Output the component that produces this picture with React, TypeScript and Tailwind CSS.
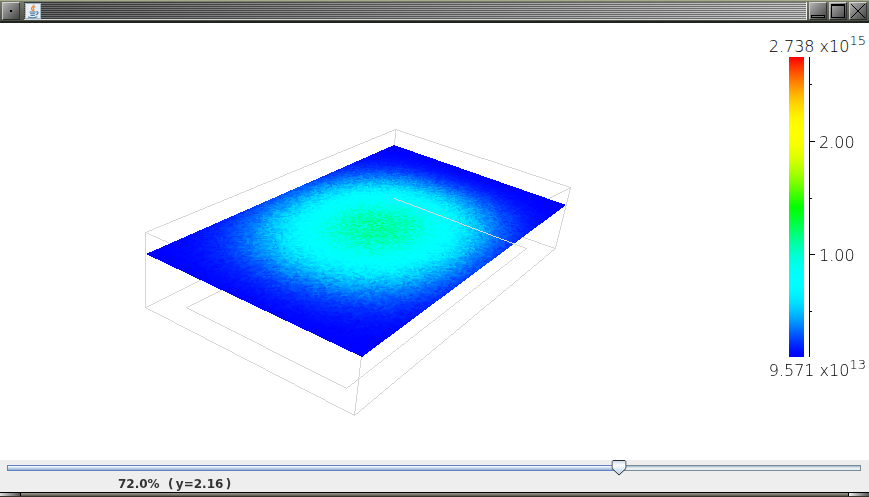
import { useEffect, useRef, useState } from "react";
import type { ReactNode } from "react";

type Point = [number, number];

const PLOT_W = 600;
const PLOT_H = 437;

// Corners of the slice plane: back, right, front, left.
const PLANE: Point[] = [
  [394, 122],
  [566, 182],
  [362, 334],
  [146, 231],
];

const OUTLINE: [Point, Point][] = [
  [[395, 106], [570, 164]],
  [[395, 106], [145, 209]],
  [[395, 106], [394, 124]],
  [[570, 164], [555, 225]],
  [[570, 164], [540, 179]],
  [[145, 209], [145, 284]],
  [[145, 209], [172, 221]],
  [[145, 284], [202, 256]],
  [[145, 284], [354, 392]],
  [[354, 392], [555, 225]],
  [[361, 332], [354, 392]],
  [[555, 225], [520, 213]],
  [[186, 284], [222, 266]],
  [[186, 284], [346, 365]],
  [[346, 365], [526, 225]],
];

const INNER_EDGE: [Point, Point] = [[394, 175], [526, 225]];

function colour(t: number): [number, number, number] {
  const q = Math.PI / 2;
  const x = Math.min(1, Math.max(0, t)) * 4;
  if (x < 1) return [0, 255 * Math.pow(Math.sin(q * x), 1.35), 255];
  if (x < 2) return [0, 255, 255 * Math.pow(Math.cos(q * (x - 1)), 1.2)];
  if (x < 3) return [255 * Math.sin(q * (x - 2)), 255, 0];
  return [255, 255 * Math.cos(q * (x - 3)), 0];
}

const GRADIENT = `linear-gradient(to top, ${Array.from({ length: 51 }, (_, i) => {
  const [r, g, b] = colour(i / 50);
  return `rgb(${Math.round(r)} ${Math.round(g)} ${Math.round(b)})`;
}).join(", ")})`;

function noise(i: number, j: number) {
  let h = Math.imul(i + 11, 374761393) ^ Math.imul(j + 7, 668265263);
  h = Math.imul(h ^ (h >>> 13), 1274126177);
  h = Math.imul(h ^ (h >>> 16), 2246822519);
  return ((h ^ (h >>> 15)) >>> 0) / 4294967296;
}

// Maps a screen point to plane coordinates in the unit square.
function planeMapper([p0, p1, p2, p3]: Point[]) {
  const dx1 = p1[0] - p2[0], dx2 = p3[0] - p2[0], dx3 = p0[0] - p1[0] + p2[0] - p3[0];
  const dy1 = p1[1] - p2[1], dy2 = p3[1] - p2[1], dy3 = p0[1] - p1[1] + p2[1] - p3[1];
  const det = dx1 * dy2 - dx2 * dy1;
  const g = (dx3 * dy2 - dx2 * dy3) / det;
  const h = (dx1 * dy3 - dx3 * dy1) / det;
  const a = p1[0] - p0[0] + g * p1[0], b = p3[0] - p0[0] + h * p3[0], c = p0[0];
  const d = p1[1] - p0[1] + g * p1[1], e = p3[1] - p0[1] + h * p3[1], f = p0[1];
  return (x: number, y: number): Point => {
    const u = (e - f * h) * x + (c * h - b) * y + (b * f - c * e);
    const v = (f * g - d) * x + (a - c * g) * y + (c * d - a * f);
    const w = (d * h - e * g) * x + (b * g - a * h) * y + (a * e - b * d);
    return [u / w, v / w];
  };
}

function line(img: ImageData, [[x0, y0], [x1, y1]]: [Point, Point]) {
  const n = Math.max(Math.abs(x1 - x0), Math.abs(y1 - y0));
  for (let i = 0; i <= n; i++) {
    const x = Math.round(x0 + ((x1 - x0) * i) / n);
    const y = Math.round(y0 + ((y1 - y0) * i) / n);
    img.data.set([214, 214, 214, 255], (y * PLOT_W + x) * 4);
  }
}

function paint(ctx: CanvasRenderingContext2D) {
  const img = ctx.createImageData(PLOT_W, PLOT_H);
  OUTLINE.forEach((l) => line(img, l));
  const map = planeMapper(PLANE);
  for (let y = 100; y < 350; y++) {
    for (let x = 140; x < 575; x++) {
      const [v, u] = map(x + 0.5, y + 0.5);
      if (u < 0 || u > 1 || v < 0 || v > 1) continue;
      const f =
        Math.pow(Math.sin(Math.PI * (0.04 + u * 0.9)), 2.4) *
        Math.pow(Math.sin(Math.PI * (0.14 + v * 0.73)), 2);
      const i = Math.floor(u * 130), j = Math.floor(v * 90);
      const r = noise(i, j) + noise(i + 500, j) - 1;
      const t = 0.375 * f * (1 + 0.08 * r) + 0.032 * r * Math.sqrt(f);
      const [cr, cg, cb] = colour(t);
      img.data.set([cr, cg, cb, 255], (y * PLOT_W + x) * 4);
    }
  }
  line(img, INNER_EDGE);
  ctx.putImageData(img, 0, 0);
}

function WindowButton({ label, children }: { label: string; children: ReactNode }) {
  return (
    <button
      type="button"
      aria-label={label}
      className="h-[18px] w-[18px] shrink-0 border border-t-[#d4d4d4] border-r-[#333] border-b-[#2b2b2b] border-l-[#c8c8c8] bg-linear-to-br from-[#b4b4b4] to-[#454545]"
    >
      <svg viewBox="0 0 16 16" className="block h-4 w-4" shapeRendering="crispEdges">{children}</svg>
    </button>
  );
}

function TitleBar() {
  return (
    <header className="flex h-[23px] items-start gap-[2px] border-t border-b-2 border-t-[#a5aa8c] border-b-[#20231e] bg-linear-to-b from-[#777b6a] to-[#4c5047] px-[2px] pt-px">
      <WindowButton label="Window menu">
        <rect x="7" y="7" width="2" height="2" fill="#000" />
      </WindowButton>
      <div className="ml-[2px] flex h-[18px] min-w-0 flex-1 items-center border-b border-b-[#d8d8d8] border-r border-r-[#eee] bg-[repeating-linear-gradient(to_bottom,rgba(0,0,0,0.4)_0px,rgba(0,0,0,0.4)_1px,rgba(255,255,255,0.1)_1px,rgba(255,255,255,0.1)_2px),linear-gradient(to_right,#585858,#c4c4c4)]">
        <svg viewBox="0 0 16 16" className="ml-px h-4 w-4 shrink-0" aria-label="Java">
          <rect width="16" height="16" rx="1" fill="#e9eef2" />
          <path d="M.5 15.5V.5h15v15z" fill="none" stroke="#9eb8cc" />
          <path d="M8.8 1.5c.7 2-3.4 2.7-2.2 4.8.4.7 1 1.1 1 1.8M10.5 3.5c-2.6 1-2.4 2-1.8 2.8.6.9-.1 1.5-.5 1.9" fill="none" stroke="#ee8434" strokeWidth="1.2" />
          <path d="M4.5 9h6.2M5 10.8h5.2M5.6 12.5h4.2M3 14c2.8.8 6.8.8 9.3-.2M11.2 9c2.8-.8 2.2 2-.4 2.7" fill="none" stroke="#4779a1" strokeWidth="1.1" />
        </svg>
      </div>
      <WindowButton label="Minimize">
        <rect x="1.5" y="12.5" width="13" height="2" fill="#777" stroke="#000" />
      </WindowButton>
      <WindowButton label="Maximize">
        <path d="M1.5 1.5h13v13h-13zM1 2.5h14" fill="none" stroke="#000" />
      </WindowButton>
      <WindowButton label="Close">
        <path d="M1 1l14 14M15 1L1 15" stroke="#000" />
      </WindowButton>
    </header>
  );
}

function Exponent({ value, power }: { value: string; power: string }) {
  return (
    <p className="flex h-6 items-end justify-end whitespace-nowrap pr-[3px] text-[16px] leading-5">
      {value} x10<span className="self-start text-[13px] leading-4">{power}</span>
    </p>
  );
}

function Legend() {
  return (
    <aside className="mt-[10px] w-[104px] shrink-0">
      <Exponent value="2.738" power="15" />
      <div className="flex h-[300px] pl-6">
        <div className="w-[15px]" style={{ backgroundImage: GRADIENT }} />
        <svg viewBox="0 0 6 300" className="ml-[5px] h-[300px] w-[6px]" shapeRendering="crispEdges" aria-hidden="true">
          <path d="M0 0h1v300h-1zM1 27h2v1h-2zM1 84h5v1h-5zM1 141h2v1h-2zM1 197h5v1h-5zM1 254h2v1h-2z" />
        </svg>
        <div className="flex flex-col gap-[93px] pt-[76px] pl-1 text-[16px] leading-5">
          <span>2.00</span>
          <span>1.00</span>
        </div>
      </div>
      <Exponent value="9.571" power="13" />
    </aside>
  );
}

export default function App() {
  const canvas = useRef<HTMLCanvasElement>(null);
  const [percent, setPercent] = useState(72);

  useEffect(() => {
    const ctx = canvas.current?.getContext("2d");
    if (ctx) paint(ctx);
  }, []);

  return (
    <div className="flex min-h-screen flex-col bg-white font-['DejaVu_Sans',sans-serif] text-black">
      <TitleBar />
      <main className="flex flex-1 items-start justify-between font-extralight">
        <canvas ref={canvas} width={PLOT_W} height={PLOT_H} role="img" aria-label="Slice through the volume" className="block" />
        <Legend />
      </main>
      <section className="h-8 bg-[#eeeeee] pr-2 pl-[7px]">
        <div className="relative h-4 pt-[5px]">
          <div className="flex h-[6px] border border-[#7a8a99] bg-linear-to-b from-[#9db6cc] via-[#e8efef] to-[#e8efef]">
            <div
              className="-my-px -ml-px border border-[#6382bf] bg-linear-to-b from-white to-[#8fb0d6]"
              style={{ width: `${percent}%` }}
            />
          </div>
          <div className="pointer-events-none absolute inset-x-[7px] top-0">
            <svg viewBox="0 0 15 16" className="absolute top-0 h-4 w-[15px] -translate-x-1/2" style={{ left: `${percent}%` }} aria-hidden="true">
              <defs>
                <linearGradient id="thumb" x2="0" y2="1">
                  <stop stopColor="#c4d8eb" />
                  <stop offset=".35" stopColor="#fff" />
                  <stop offset=".5" stopColor="#e6eff8" />
                  <stop offset="1" stopColor="#b8cfe5" />
                </linearGradient>
              </defs>
              <path d="M1.5.5h12l1 1v7l-7 6.5-7-6.5v-7z" fill="url(#thumb)" stroke="#2b2b2b" />
            </svg>
          </div>
          <input
            id="slice"
            type="range"
            min={0}
            max={100}
            value={percent}
            onChange={(e) => setPercent(Number(e.target.value))}
            className="absolute inset-0 h-4 w-full cursor-pointer opacity-0"
          />
        </div>
        <label htmlFor="slice" className="ml-[111px] block text-[12px] leading-4 font-bold whitespace-pre text-[#333]">
          {`${percent.toFixed(1)}%  (\u2009y=${(percent * 0.03).toFixed(2)}\u2009)`}
        </label>
      </section>
      <footer className="flex h-[5px] border-t border-b border-t-black border-b-[#33332e] bg-linear-to-b from-[#a19e91] to-[#55534a]">
        <div className="w-[21px] border-r border-black bg-linear-to-r from-[#ddd] to-[#555]" />
        <div className="flex-1" />
        <div className="w-[21px] border-l border-black bg-linear-to-r from-[#eee] to-[#555]" />
      </footer>
    </div>
  );
}
